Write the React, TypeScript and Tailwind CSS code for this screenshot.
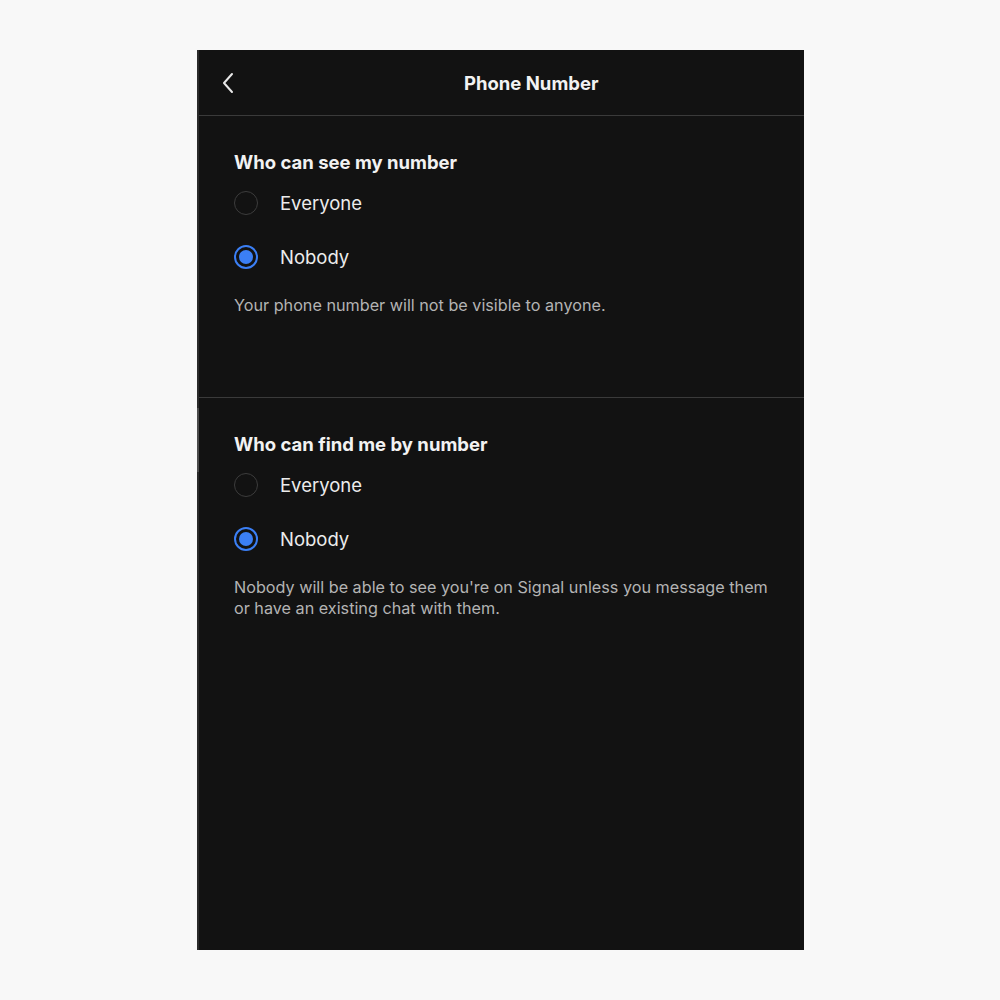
import React from 'react';

type Option = { label: string; checked: boolean };

const Radio = ({ checked }: { checked: boolean }) =>
  checked ? (
    <span className="flex h-[24px] w-[24px] items-center justify-center rounded-full border-2 border-[#3b7ff5]">
      <span className="h-[14px] w-[14px] rounded-full bg-[#3b7ff5]" />
    </span>
  ) : (
    <span className="h-[24px] w-[24px] rounded-full border-[1.5px] border-[#3c3c3c]" />
  );

const Section = ({
  title,
  options,
  children,
}: {
  title: string;
  options: Option[];
  children: React.ReactNode;
}) => (
  <section className="pl-[35px] pr-[30px] pt-[34px]">
    <h2 className="text-[18.5px] font-bold leading-[24px] text-[#f2f2f2]">{title}</h2>
    <div className="mt-[2px]">
      {options.map((o) => (
        <div key={o.label} className="flex h-[54px] items-center gap-[22px]">
          <Radio checked={o.checked} />
          <span className="text-[18.5px] leading-[24px] text-[#ececec]">{o.label}</span>
        </div>
      ))}
    </div>
    <p className="mt-[11px] text-[16.2px] leading-[21px] text-[#b4b4b4]">{children}</p>
  </section>
);

export default function App() {
  return (
    <div
      className="flex min-h-screen items-start justify-center bg-[#f8f8f8] pt-[50px]"
      style={{ fontFamily: 'Inter, "Noto Sans", sans-serif' }}
    >
      <div className="relative ml-[1px] flex h-[900px] w-[607px] flex-col border-l-2 border-[#2a2a2a] bg-[#121212]">
        {/* scroll indicator on the left edge */}
        <span className="absolute left-[-2px] top-[358px] h-[64px] w-[2px] bg-[#4a4a4a]" />

        <header className="flex h-[66px] items-center border-b border-[#3a3a3a] pl-[22px]">
          <svg width="14" height="22" viewBox="0 0 14 22" fill="none" className="shrink-0">
            <path d="M11 2 L3 11 L11 20" stroke="#e8e8e8" strokeWidth="2" strokeLinecap="round" strokeLinejoin="round" />
          </svg>
          <h1 className="ml-[229px] text-[18.5px] font-bold leading-[24px] text-[#f2f2f2]">Phone Number</h1>
        </header>

        <div className="h-[282px] border-b border-[#3a3a3a]">
          <Section
            title="Who can see my number"
            options={[
              { label: 'Everyone', checked: false },
              { label: 'Nobody', checked: true },
            ]}
          >
            Your phone number will not be visible to anyone.
          </Section>
        </div>

        <Section
          title="Who can find me by number"
          options={[
            { label: 'Everyone', checked: false },
            { label: 'Nobody', checked: true },
          ]}
        >
          Nobody will be able to see you're on Signal unless you message them or have an existing chat with them.
        </Section>
      </div>
    </div>
  );
}
